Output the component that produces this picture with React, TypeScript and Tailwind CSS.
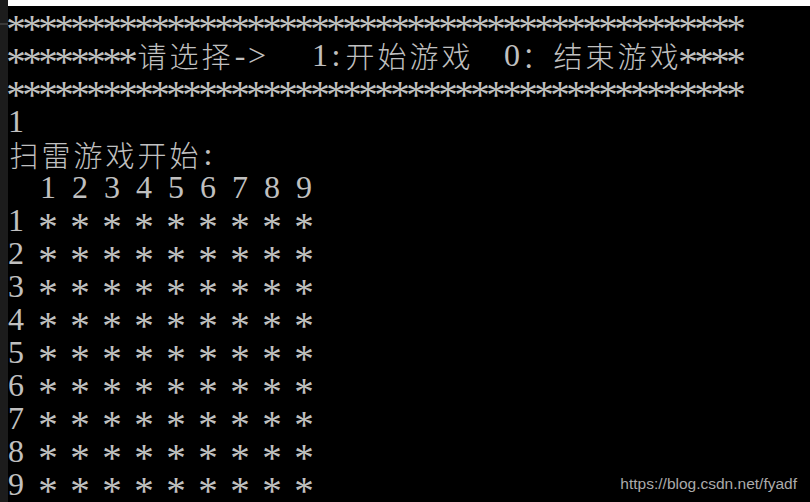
import React from "react";

const isWide = (c: string) => /[\u3000-\u9fff\uff00-\uffef]/.test(c);

function Cell({ ch }: { ch: string }) {
  if (ch === "*") {
    return (
      <span className="w-4 h-[33px] flex items-center justify-center">
        <span className="font-['Liberation_Serif',serif] text-[39px] leading-[16px] translate-y-[6px]">*</span>
      </span>
    );
  }
  if (isWide(ch)) {
    return (
      <span className="w-8 h-[33px] text-center font-['Noto_Sans_CJK_SC',sans-serif] font-light text-[29px] leading-[33px]">
        {ch}
      </span>
    );
  }
  return (
    <span className="w-4 h-[33px] text-center font-['Liberation_Serif',serif] text-[32px] leading-[33px]">
      {ch === " " ? "\u00a0" : ch}
    </span>
  );
}

function Line({ text }: { text: string }) {
  return (
    <div className="flex h-[33px]">
      {Array.from(text).map((c, i) => (
        <Cell key={i} ch={c} />
      ))}
    </div>
  );
}

export default function App() {
  const stars = "*".repeat(46);
  const lines = [
    stars,
    "********请选择->   1:开始游戏  0：结束游戏****",
    stars,
    "1",
    "扫雷游戏开始:",
    "  1 2 3 4 5 6 7 8 9",
  ];
  for (let r = 1; r <= 9; r++) lines.push(`${r} * * * * * * * * * `);
  return (
    <div className="relative flex w-[810px] h-[502px] bg-black overflow-hidden text-[#c0c0c0]">
      <div className="w-2 flex flex-col bg-[#1c1c1c]">
        <div className="h-[23px]" />
        <div className="h-[2px] bg-[#3a3a3a]" />
      </div>
      <div className="flex-1 flex flex-col">
        <div className="h-[6px] bg-white" />
        <div className="flex flex-col">
          {lines.map((t, i) => (
            <Line key={i} text={t} />
          ))}
        </div>
      </div>
      <div className="absolute right-[13px] bottom-[9px] font-['Liberation_Sans',sans-serif] text-[15.5px] leading-[18px] text-[#ababab]">
        https://blog.csdn.net/fyadf
      </div>
    </div>
  );
}
